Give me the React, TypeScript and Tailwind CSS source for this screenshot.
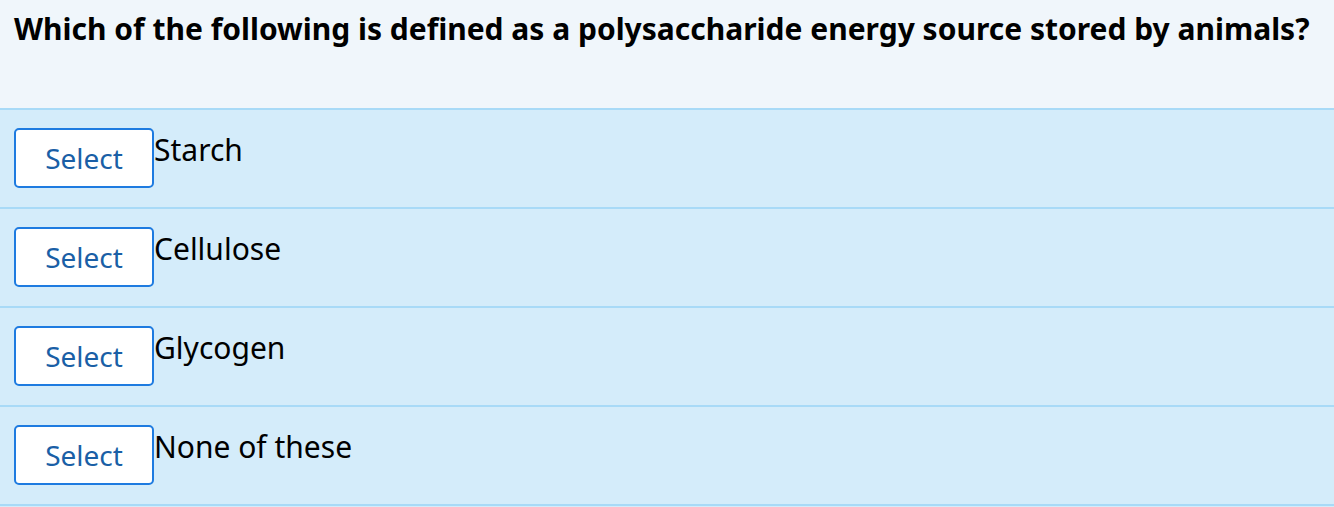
const OPTIONS = ['Starch', 'Cellulose', 'Glycogen', 'None of these'];

export default function App() {
  return (
    <div className="w-[1334px] h-[507px] overflow-hidden bg-[#d4ecfa] font-['Noto_Sans',sans-serif] text-black">
      <div className="h-[110px] bg-[#f0f6fb] border-b-2 border-[#a8daf7] pl-[14px] pt-[6px]">
        <h1 className="text-[30px] font-bold leading-normal">
          Which of the following is defined as a polysaccharide energy source stored by animals?
        </h1>
      </div>
      {OPTIONS.map((opt) => (
        <div key={opt} className="h-[99px] border-b-2 border-[#a8daf7] flex items-start pl-[14px] pt-[18px]">
          <button className="w-[140px] h-[60px] bg-white border-2 border-[#1e7be0] rounded-[5px] text-[28px] text-[#1a5fa6] leading-none flex items-center justify-center">
            Select
          </button>
          <span className="text-[30px] leading-normal -mt-[1px]">{opt}</span>
        </div>
      ))}
    </div>
  );
}
